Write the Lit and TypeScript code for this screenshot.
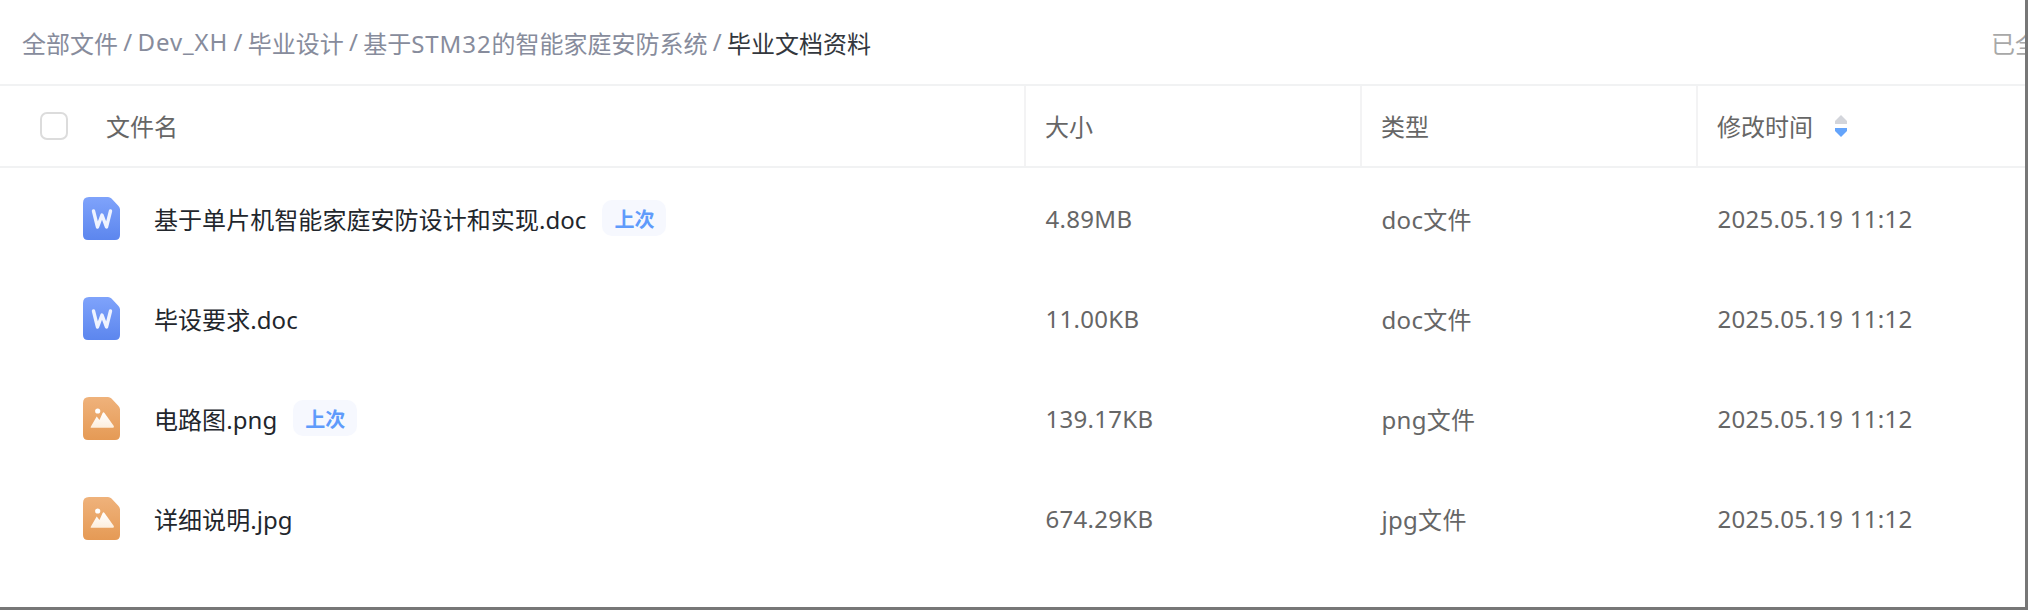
import { LitElement, html, css, svg } from "lit";
import { customElement } from "lit/decorators.js";

type Row = { name: string; kind: "doc" | "img"; last?: boolean; size: string; type: string };

const rows: Row[] = [
  { name: "基于单片机智能家庭安防设计和实现.doc", kind: "doc", last: true, size: "4.89MB", type: "doc文件" },
  { name: "毕设要求.doc", kind: "doc", size: "11.00KB", type: "doc文件" },
  { name: "电路图.png", kind: "img", last: true, size: "139.17KB", type: "png文件" },
  { name: "详细说明.jpg", kind: "img", size: "674.29KB", type: "jpg文件" },
];

const fileShape = "M6 0H25Q27 0 28.5 1.5L35.5 9Q37 10.5 37 12.5V38Q37 43 32 43H5Q0 43 0 38V6Q0 0 6 0Z";

function icon(kind: "doc" | "img") {
  const id = kind === "doc" ? "g-doc" : "g-img";
  const top = kind === "doc" ? "#7fa3fb" : "#efb27b";
  const bottom = kind === "doc" ? "#5c86ee" : "#e59a55";
  return html`<svg class="icon" width="37" height="43" viewBox="0 0 37 43">
    <defs>
      <linearGradient id=${id} x1="0" y1="0" x2="0" y2="1">
        <stop offset="0" stop-color=${top}></stop>
        <stop offset="1" stop-color=${bottom}></stop>
      </linearGradient>
      <linearGradient id="g-fg" x1="0" y1="0" x2="0" y2="1">
        <stop offset="0" stop-color="#ffffff"></stop>
        <stop offset="1" stop-color="#fdeedd"></stop>
      </linearGradient>
    </defs>
    <path d=${fileShape} fill="url(#${id})"></path>
    ${kind === "doc"
      ? svg`<polyline points="10.5,14 14.5,30 19,18 23.5,30 27.5,14" fill="none" stroke="#eef3ff" stroke-width="3.4" stroke-linejoin="round" stroke-linecap="round"></polyline>`
      : svg`<circle cx="14.7" cy="14" r="2.6" fill="#fff"></circle>
            <path d="M7.7 30.7Q7.5 30 8.2 29L13.7 19.5L16.5 23L19.6 16Q20.5 14.6 21.5 16L30.8 29Q31.4 30.7 30 30.7Z" fill="url(#g-fg)"></path>`}
  </svg>`;
}

@customElement("app-root")
export class AppRoot extends LitElement {
  static styles = css`
    :host {
      display: block;
      width: 2028px;
      height: 610px;
      box-sizing: border-box;
      background: #fff;
      border-right: 3px solid #777;
      border-bottom: 3px solid #777;
      overflow: hidden;
      font-family: "Noto Sans", "Noto Sans CJK SC", sans-serif;
      font-size: 24px;
    }
    .crumbbar {
      height: 84px;
      display: flex;
      align-items: center;
      padding-left: 22px;
      border-bottom: 2px solid #f1f2f3;
      color: #878c9c;
      white-space: nowrap;
    }
    .crumbs {
      flex: 1;
      display: flex;
      gap: 5.3px;
    }
    .latin {
      letter-spacing: 0.9px;
    }
    .current {
      color: #33373d;
    }
    .status {
      width: 34px;
      overflow: hidden;
      color: #a8a8a8;
    }
    .grid {
      display: grid;
      grid-template-columns: 1025px 336px 336px 1fr;
      align-items: center;
    }
    .head {
      height: 80px;
      border-bottom: 2px solid #f1f2f3;
      color: #666;
      align-items: stretch;
    }
    .hcell {
      display: flex;
      align-items: center;
      padding-left: 19px;
      border-left: 2px solid #f3f3f4;
      margin-left: -1px;
      padding-bottom: 2px;
    }
    .hname {
      display: flex;
      align-items: center;
      padding-left: 40px;
      padding-bottom: 2px;
    }
    .check {
      width: 28px;
      height: 28px;
      box-sizing: border-box;
      border: 2px solid #dcdcdc;
      border-radius: 7px;
      margin-right: 38px;
      margin-top: 2px;
    }
    .sort {
      display: flex;
      flex-direction: column;
      gap: 4px;
      margin-left: 22px;
      margin-top: 2px;
    }
    .row {
      height: 100px;
      color: #666;
    }
    .cell {
      padding-left: 20.5px;
      letter-spacing: 0.3px;
    }
    .name {
      display: flex;
      align-items: center;
      padding-left: 83px;
      color: #22262c;
      letter-spacing: 0.06px;
    }
    .icon {
      flex: none;
      margin-right: 34px;
    }
    .tag {
      margin-left: 16px;
      width: 64px;
      height: 36px;
      border-radius: 10px;
      background: #f6f8fe;
      color: #5f9bfb;
      font-size: 20px;
      font-weight: 700;
      display: flex;
      align-items: center;
      justify-content: center;
    }
  `;

  render() {
    return html`
      <div class="crumbbar">
        <div class="crumbs">
          <span>全部文件</span><span>/</span>
          <span class="latin">Dev_XH</span><span>/</span>
          <span>毕业设计</span><span>/</span>
          <span>基于<span class="latin">STM32</span>的智能家庭安防系统</span><span>/</span>
          <span class="current">毕业文档资料</span>
        </div>
        <div class="status">已全部加载</div>
      </div>
      <div class="grid head">
        <div class="hname"><span class="check"></span>文件名</div>
        <div class="hcell">大小</div>
        <div class="hcell">类型</div>
        <div class="hcell">
          修改时间
          <span class="sort">
            <svg width="12" height="9" viewBox="0 0 12 9"><path d="M6 0L12 6V9H0V6Z" fill="#d3d5db"></path></svg>
            <svg width="12" height="9" viewBox="0 0 12 9"><path d="M0 0H12V3L6 9L0 3Z" fill="#64a4fb"></path></svg>
          </span>
        </div>
      </div>
      ${rows.map(
        (r) => html`
          <div class="grid row">
            <div class="name">
              ${icon(r.kind)}<span>${r.name}</span>
              ${r.last ? html`<span class="tag">上次</span>` : ""}
            </div>
            <div class="cell">${r.size}</div>
            <div class="cell">${r.type}</div>
            <div class="cell">2025.05.19 11:12</div>
          </div>
        `
      )}
    `;
  }
}
